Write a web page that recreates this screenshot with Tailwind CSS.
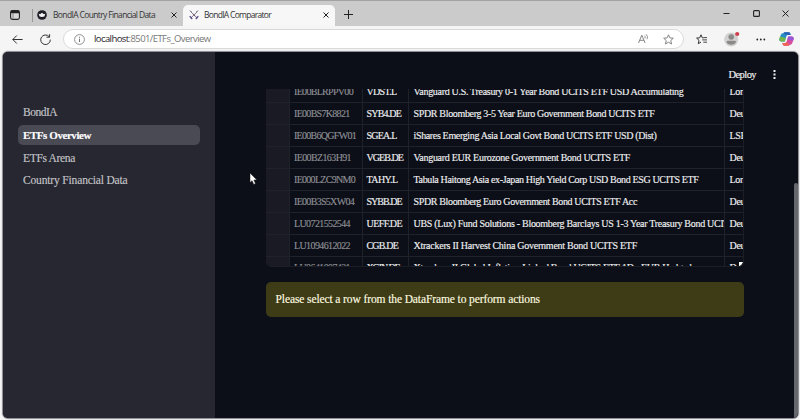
<!DOCTYPE html>
<html lang="en">
<head>
<meta charset="utf-8">
<title>BondIA Comparator</title>
<script src="https://cdn.jsdelivr.net/npm/@tailwindcss/browser@4"></script>
</head>
<body class="w-[800px] h-[420px] overflow-hidden bg-[#f5f5f5] font-['Open_Sans','Noto_Sans',sans-serif] flex flex-col whitespace-nowrap">
<!-- Tab strip -->
<header class="h-[26px] shrink-0 bg-[#cbcbcb] border-t border-[#a3a3a3] flex items-end">
  <div class="flex h-[21px] items-center w-[183px] pb-px">
    <svg class="ml-[10px] size-[10px] shrink-0" viewBox="0 0 10 10"><rect x=".6" y=".6" width="8.8" height="8.8" rx="1.8" fill="#d8d8d8" stroke="#222" stroke-width="1.1"/><path d="M.6 3.2V2.2Q.6.6 2.2.6H7.8Q9.4.6 9.4 2.2V3.2Z" fill="#222"/><path d="M3 3V9.3" stroke="#777" stroke-width=".8"/></svg>
    <i class="ml-[12px] w-px h-[13px] bg-[#969696]"></i>
    <svg class="ml-[4px] size-[10px] shrink-0" viewBox="0 0 11 11"><circle cx="5.5" cy="5.5" r="5.3" fill="#1d1e25"/><path d="M1.8 4L3.4 4.8L5.5 3L7.6 4.8L9.2 4L8.1 7.2Q5.5 8.1 2.9 7.2Z" fill="#f4f4f4"/></svg>
    <span data-w="102" class="ml-[6px] text-[8.5px] text-[#333]">BondIA Country Financial Data</span>
    <svg class="ml-auto mr-[6px] size-[6px] shrink-0" viewBox="0 0 6 6"><path d="M.5.5L5.5 5.5M5.5.5L.5 5.5" stroke="#222" stroke-width="1"/></svg>
  </div>
  <div class="flex h-[21px] items-center w-[152px] bg-[#f7f7f7] rounded-t-[5px] pb-px">
    <svg class="ml-[6px] size-[10px] shrink-0" viewBox="0 0 10 10"><path d="M.8.8L8.2 8M9.2.8L1.8 8" stroke="#77748a" stroke-width="1"/><path d="M.8.8L3 1.7M9.2.8L7 1.7" stroke="#a9a7b0" stroke-width="1"/><path d="M.7 6.2L3.2 9M9.3 6.2L6.8 9" stroke="#503e80" stroke-width="1.2"/><path d="M4.3 4.5L5.7 5.8" stroke="#7b3145"/></svg>
    <span data-w="67" class="ml-[5px] text-[8.5px] text-[#333]">BondIA Comparator</span>
    <svg class="ml-auto mr-[6px] size-[6px] shrink-0" viewBox="0 0 6 6"><path d="M.5.5L5.5 5.5M5.5.5L.5 5.5" stroke="#222" stroke-width="1"/></svg>
  </div>
  <div class="flex h-[21px] items-center flex-1 pb-[2px]">
    <svg class="ml-[9px] size-[9px]" viewBox="0 0 9 9"><path d="M4.5 0V9M0 4.5H9" stroke="#222" stroke-width="1"/></svg>
    <div class="ml-auto mb-[3px] mr-[11px] flex items-center gap-[22.5px]">
      <svg class="size-[7px]" viewBox="0 0 7 7"><path d="M.5 3.5H6.5" stroke="#222"/></svg>
      <svg class="size-[7px]" viewBox="0 0 7 7"><rect x=".6" y=".6" width="5.8" height="5.8" rx="1" fill="none" stroke="#222" stroke-width="1.1"/></svg>
      <svg class="size-[7px]" viewBox="0 0 7 7"><path d="M.5.5L6.5 6.5M6.5.5L.5 6.5" stroke="#222"/></svg>
    </div>
  </div>
</header>
<!-- Address bar -->
<nav class="h-[26px] shrink-0 flex items-center">
  <svg class="ml-[12px] w-[11px] h-[9px]" viewBox="0 0 11 9"><path d="M10.6 4.5H.8M4.8.5L.8 4.5L4.8 8.5" fill="none" stroke="#333" stroke-width="1"/></svg>
  <svg class="ml-[17px] size-[11px]" viewBox="0 0 11 11"><path d="M9.2 2.7A4.8 4.8 0 1 0 10.3 5.6M9.6.2V3.2H6.5" fill="none" stroke="#333" stroke-width="1"/></svg>
  <div class="ml-[12px] w-[621px] h-[20px] rounded-full border border-[#d9d9d9] bg-white flex items-center">
    <svg class="ml-[10px] size-[11px]" viewBox="0 0 11 11"><circle cx="5.5" cy="5.5" r="4.9" fill="none" stroke="#777" stroke-width=".8"/><path d="M5.5 4.7V8M5.5 2.8V3.8" stroke="#666" stroke-width=".9"/></svg>
    <span data-w="116.5" class="ml-[9px] text-[9.5px] text-[#777]"><span class="text-[#1f2229]">localhost</span>:8501/ETFs_Overview</span>
    <svg class="ml-auto w-[11px] h-[10px]" viewBox="0 0 11 10"><path d="M.5 9L3.8 1.2L7.1 9M1.7 6.3H5.9" fill="none" stroke="#777" stroke-width=".9"/><path d="M6.5 1.6Q7.7 2.8 7 4.4M8.2.3Q10.5 2.7 9 5.2" fill="none" stroke="#777" stroke-width=".8"/></svg>
    <svg class="ml-[14px] mr-[9px] size-[11px]" viewBox="0 0 11 11"><path d="M5.5.8L6.9 3.9L10.3 4.2L7.8 6.5L8.5 10L5.5 8.2L2.5 10L3.2 6.5L.7 4.2L4.1 3.9Z" fill="none" stroke="#777" stroke-width=".9" stroke-linejoin="round"/></svg>
  </div>
  <svg class="ml-[12px] w-[12px] h-[11px]" viewBox="0 0 12 11"><path d="M7.4 4L6.3 3.8L5 .8L3.7 3.8L.6 4.1L3 6.3L2.3 9.7L5 8.1" fill="none" stroke="#333" stroke-width="1" stroke-linejoin="round"/><path d="M7.3 3.6H11M6.2 5.9H11M7.3 8.2H11" stroke="#333" stroke-width=".9"/></svg>
  <svg class="ml-[15.5px] w-[16px] h-[16px]" viewBox="0 0 16 16"><circle cx="7.2" cy="8.5" r="7" fill="#d2d1d1"/><circle cx="7.2" cy="6" r="2.8" fill="#8b8988"/><path d="M2.5 11Q2.5 9.7 4 9.7H10.4Q12 9.7 12 11Q10.8 13.7 7.2 13.7Q3.7 13.7 2.5 11Z" fill="#8b8988"/><circle cx="13.2" cy="3" r="2.1" fill="#cf3f4d"/></svg>
  <svg class="ml-[16px] w-[10px] h-[3px]" viewBox="0 0 10 3"><g fill="#222"><circle cx="1.3" cy="1.5" r=".9"/><circle cx="4.8" cy="1.5" r=".9"/><circle cx="8.3" cy="1.5" r=".9"/></g></svg>
  <svg class="ml-[13px] w-[15px] h-[14px]" viewBox="0 0 15 14"><path d="M4.6 1Q5 .3 6 .3H9.8Q10.9.3 11.2 1.4L11.7 3H9Q7.8 3 7.4 4.2L5.8 9.4H2.3Q-.3 9.4.5 6.6L1.7 3Q2.4 1 4.6 1Z" fill="#278ec8"/><path d="M1.2 4.5L.5 6.6Q-.3 9.4 2.3 9.4H5.8L6.8 6Z" fill="#70b84c"/><path d="M4.6 1Q5 .3 6 .3H9.8Q10.9.3 11.2 1.4L11.7 3H9L6 2.5Z" fill="#2860b8"/><path d="M10.4 13Q10 13.7 9 13.7H5.2Q4.1 13.7 3.8 12.6L3.3 11H6Q7.2 11 7.6 9.8L9.2 4.6H12.7Q15.3 4.6 14.5 7.4L13.3 11Q12.6 13 10.4 13Z" fill="#d94b9c"/><path d="M9.2 4.6H12.7Q15.3 4.6 14.5 7.4L14 8.8L8.3 7.5Z" fill="#9956d8"/><path d="M3.3 11H6Q7.2 11 7.6 9.8L10.5 13Q10 13.7 9 13.7H5.2Q4.1 13.7 3.8 12.6Z" fill="#ee6655"/></svg>
</nav>
<!-- Streamlit page -->
<main class="ml-[3px] w-[795px] h-[366px] shrink-0 rounded-[5px] overflow-hidden bg-[#0c0f17] flex font-['Liberation_Serif',serif] shadow-[0_0_1px_1px_#85858d] [-webkit-text-stroke:0.15px]">
  <aside class="w-[212px] bg-[#262730] pt-[50px] pl-[15px] shrink-0 text-[11.5px] text-[#c4c4c8]">
    <ul class="flex flex-col gap-[3px]">
      <li class="h-[20px] w-[182px] pl-[5px] pt-px flex items-center"><span data-w="34">BondIA</span></li>
      <li class="h-[20px] w-[182px] pl-[5px] flex items-center rounded-[5px] bg-[#494a54] font-bold text-white text-[11px]"><span data-w="68">ETFs Overview</span></li>
      <li class="h-[20px] w-[182px] pl-[5px] pt-px flex items-center"><span data-w="52">ETFs Arena</span></li>
      <li class="h-[20px] w-[182px] pl-[5px] flex items-center"><span data-w="104.5">Country Financial Data</span></li>
    </ul>
  </aside>
  <section class="flex-1 flex flex-col pl-[50.5px] text-[#f0f0f2]">
    <div class="h-[37px] shrink-0 flex items-center justify-end pt-[8px] pr-[18.5px]">
      <span data-w="27.5" class="text-[10.5px]">Deploy</span>
      <svg class="ml-[16.5px] w-[3px] h-[9px]" viewBox="0 0 3 9"><g fill="#f0f0f2"><rect x=".5" y="0" width="2" height="2"/><rect x=".5" y="3.5" width="2" height="2"/><rect x=".5" y="7" width="2" height="2"/></g></svg>
    </div>
    <div class="w-[478px] h-[177.5px] shrink-0 rounded-b-[5px] overflow-hidden border-r border-b border-[#1c1e26] text-[10px] relative flex flex-col justify-end">
      <div id="rows" class="mb-[-14px]"></div>
      <svg class="absolute right-0 bottom-0 size-[4px]" viewBox="0 0 4 4"><path d="M0 0H4L3 2L1 4H0Z" fill="#fff"/></svg>
    </div>
    <div class="mt-[15px] w-[478px] h-[35.5px] rounded-[5px] bg-[#3e3b17] flex items-center pl-[10px] text-[11.5px] text-[#fffde0]"><span data-w="264.5">Please select a row from the DataFrame to perform actions</span></div>
  </section>
  <div class="w-[4px] flex flex-col justify-end bg-[#0c0f17]"><div class="h-[235px] rounded-t-[2px] bg-[#66676c]"></div></div>
</main>
<svg class="absolute left-[249px] top-[172px] w-[9px] h-[14px]" viewBox="0 0 9 14"><path d="M1 1V10.6L3.1 8.7L4.7 12.4L6.5 11.6L4.9 8H7.9Z" fill="#fff" stroke="#111" stroke-width=".5"/></svg>
<script>
const data = [
  ["IE00BLRPPV00", 59, "VDST.L", 30, "Vanguard U.S. Treasury 0-1 Year Bond UCITS ETF USD Accumulating", 270, "London"],
  ["IE00BS7K8821", 55.5, "SYB4.DE", 34.5, "SPDR Bloomberg 3-5 Year Euro Government Bond UCITS ETF", 241, "Deutsche"],
  ["IE00B6QGFW01", 62, "SGEA.L", 30, "iShares Emerging Asia Local Govt Bond UCITS ETF USD (Dist)", 243, "LSE"],
  ["IE00BZ163H91", 57, "VGEB.DE", 36.5, "Vanguard EUR Eurozone Government Bond UCITS ETF", 216.5, "Deutsche"],
  ["IE000LZC9NM0", 61, "TAHY.L", 31, "Tabula Haitong Asia ex-Japan High Yield Corp USD Bond ESG UCITS ETF", 285, "London"],
  ["IE00B3S5XW04", 60, "SYBB.DE", 35, "SPDR Bloomberg Euro Government Bond UCITS ETF Acc", 223.5, "Deutsche"],
  ["LU0721552544", 56, "UEFF.DE", 35.5, "UBS (Lux) Fund Solutions - Bloomberg Barclays US 1-3 Year Treasury Bond UCITS", 321, "Deutsche"],
  ["LU1094612022", 56, "CGB.DE", 31.5, "Xtrackers II Harvest China Government Bond UCITS ETF", 223.5, "Deutsche"],
  ["LU0641007421", 56, "XGIN.DE", 33, "Xtrackers II Global Inflation-Linked Bond UCITS ETF 1D - EUR Hedged", 278, "Deutsche"]
];
document.getElementById("rows").innerHTML = data.map(r => `
<div class="flex h-[22.1px] border-b border-[#20222a] items-stretch leading-[22px]">
  <div class="w-[23.5px] shrink-0 bg-[#1a1a24]"></div>
  <div class="w-[72.5px] shrink-0 border-l border-[#20222a] pl-[4px] text-[#8d8e94]"><span data-w="${r[1]}">${r[0]}</span></div>
  <div class="w-[46.5px] shrink-0 border-l border-[#20222a] pl-[4px]"><span data-w="${r[3]}">${r[2]}</span></div>
  <div class="w-[316px] shrink-0 border-l border-[#20222a] pl-[4.5px] overflow-hidden"><span data-w="${r[5]}">${r[4]}</span></div>
  <div class="w-[30px] shrink-0 border-l border-[#20222a] pl-[4.5px] tracking-[-0.3px]">${r[6]}</div>
</div>`).join("");
function fit() {
  document.querySelectorAll("[data-w]").forEach(e => {
    e.style.letterSpacing = "0px";
    e.style.letterSpacing = (e.dataset.w - e.getBoundingClientRect().width) / e.textContent.length + "px";
  });
}
new ResizeObserver(fit).observe(document.querySelector("main"));
addEventListener("load", fit);
</script>
</body>
</html>
